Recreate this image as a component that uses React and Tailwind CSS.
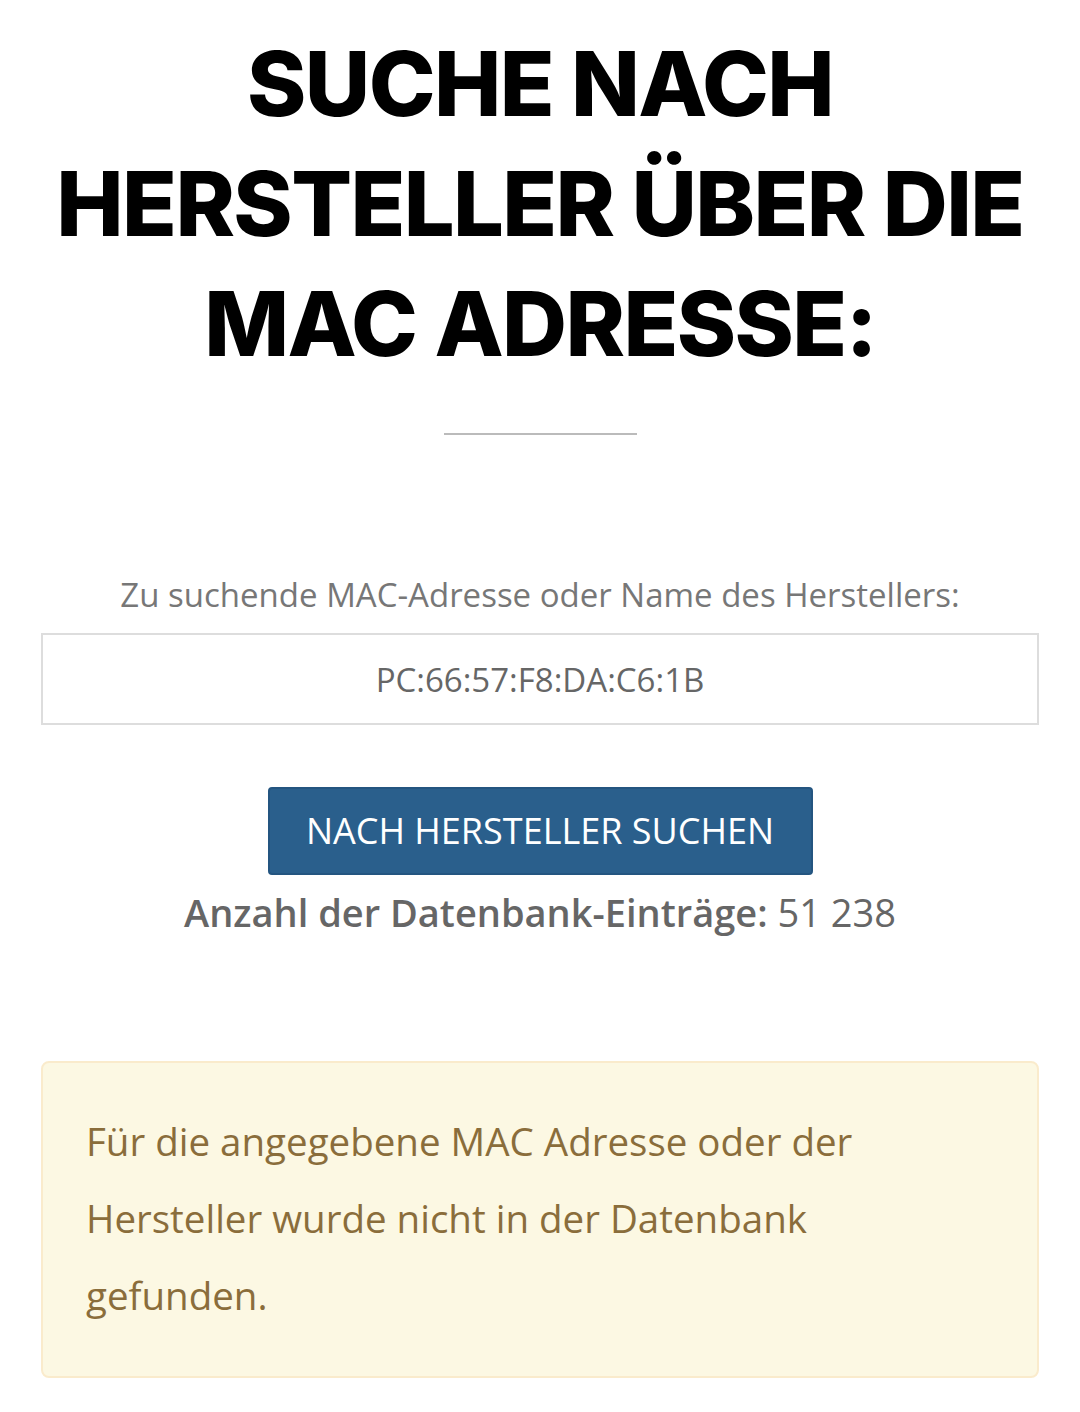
export default function App() {
  return (
    <div className="min-h-[1412px] bg-white px-[41px] pt-[24px]" style={{ fontFamily: '"Open Sans", sans-serif' }}>
      <h1
        className="text-center text-[90px] leading-[120px] font-extrabold tracking-[-0.018em] text-black"
        style={{ fontFamily: 'Inter, sans-serif' }}
      >
        SUCHE NACH HERSTELLER ÜBER DIE MAC ADRESSE:
      </h1>
      <div className="mx-auto mt-[49px] h-[2px] w-[193px] bg-[#bbbbbb]" />

      <div className="mt-[138px] text-center text-[33px] leading-[44px] text-[#777777]">
        Zu suchende MAC-Adresse oder Name des Herstellers:
      </div>
      <input
        type="text"
        defaultValue="PC:66:57:F8:DA:C6:1B"
        className="mt-[16px] block h-[92px] w-full border-2 border-[#dddddd] bg-white text-center text-[33px] text-[#666666] outline-none"
      />

      <div className="mt-[62px] flex justify-center">
        <button className="h-[88px] w-[545px] rounded-[4px] border-2 border-[#245580] bg-[#2a5f8c] text-[36px] font-medium text-white">
          NACH HERSTELLER SUCHEN
        </button>
      </div>
      <div className="mt-[10px] text-center text-[38px] leading-[54px] text-[#666666]">
        <span className="font-semibold">Anzahl der Datenbank-Einträge:</span> 51 238
      </div>

      <div className="mt-[122px] rounded-[8px] border-2 border-[#faebcc] bg-[#fcf8e3] pl-[43px] pr-[80px] pt-[40px] pb-[42px] text-[38.5px] leading-[77px] text-[#8a6d3b]">
        Für die angegebene MAC Adresse oder der Hersteller wurde nicht in der Datenbank gefunden.
      </div>
    </div>
  );
}
